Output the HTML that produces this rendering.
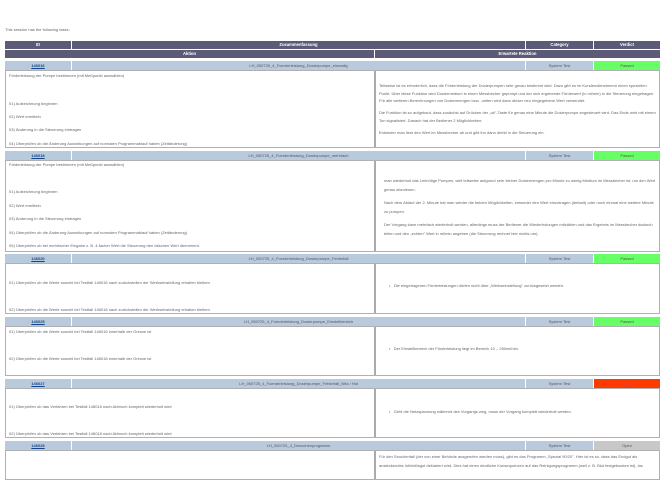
<!DOCTYPE html>
<html><head><meta charset="utf-8">
<style>
*{margin:0;padding:0;box-sizing:border-box}
body{width:668px;height:468px;background:#fff;position:relative;overflow:hidden;font-family:"Liberation Sans",sans-serif;font-size:4px;color:#666}
.a{position:absolute;white-space:nowrap}
.d{position:absolute;background:#5b5b78;color:#fff;font-weight:bold;text-align:center;line-height:8px;font-size:4.2px}
.h{position:absolute;background:#b8cadb;color:#556;text-align:center;line-height:9px;font-size:4px}
.c{position:absolute;border:1px solid #b0b0b0;background:#fff}
.v{position:absolute;line-height:9px;text-align:center;font-size:4px;color:#555}
.id{color:#114488;text-decoration:underline;font-weight:bold}
</style></head><body>
<div class="a" style="left:5px;top:27px;color:#666">This session has the following tasks:</div>

<div class="d" style="left:5px;top:41px;width:66px;height:8px">ID</div>
<div class="d" style="left:72px;top:41px;width:453px;height:8px">Zusammenfassung</div>
<div class="d" style="left:526px;top:41px;width:67px;height:8px">Category</div>
<div class="d" style="left:594px;top:41px;width:66px;height:8px">Verdict</div>
<div class="d" style="left:5px;top:50px;width:369px;height:8px">Aktion</div>
<div class="d" style="left:375px;top:50px;width:285px;height:8px">Erwartete Reaktion</div>

<div class="h" style="left:5px;top:61px;width:66px;height:9px"><span class="id">146016</span></div>
<div class="h" style="left:72px;top:61px;width:453px;height:9px">LH_050725_4_Foerderleistung_Dosierpumpe_einmalig</div>
<div class="h" style="left:526px;top:61px;width:67px;height:9px">System Test</div>
<div class="v" style="left:594px;top:61px;width:66px;height:9px;background:#66ff66">Passed</div>
<div class="c" style="left:5px;top:70px;width:655px;height:78px"></div>
<div style="position:absolute;left:374px;top:71px;width:2px;height:76px;background:#aaa"></div>
<div class="a" style="left:9px;top:73px">Förderleistung der Pumpe bestimmen (mit Meßpunkt auswählen)</div>
<div class="a" style="left:9px;top:101px">01) Aufzeichnung beginnen</div>
<div class="a" style="left:9px;top:114px">02) Wert ermitteln</div>
<div class="a" style="left:9px;top:127px">03) Änderung in die Steuerung eintragen</div>
<div class="a" style="left:9px;top:141px">04) Überprüfen ob die Änderung Auswirkungen auf normalen Programmablauf haben (Zeitänderung)</div>
<div class="a" style="left:379px;top:83px">Teilweise ist es erforderlich, dass die Förderleistung der Dosierpumpen sehr genau bestimmt wird. Dazu gibt es im Kundendienstmenü einen speziellen</div>
<div class="a" style="left:379px;top:91px">Punkt. Über diese Funktion wird Dosiermedium in einen Messbecher gepumpt und der sich ergebende Förderwert (in ml/min) in die Steuerung eingetragen.</div>
<div class="a" style="left:379px;top:98px">Für alle weiteren Berechnungen von Dosiermengen bzw. -zeiten wird dann dieser neu eingegebene Wert verwendet.</div>
<div class="a" style="left:379px;top:110px">Die Funktion ist so aufgebaut, dass zunächst auf Drücken der „ok"-Taste für genau eine Minute die Dosierpumpe angesteuert wird. Das Ende wird mit einem</div>
<div class="a" style="left:379px;top:118px">Ton signalisiert. Danach hat der Bediener 2 Möglichkeiten:</div>
<div class="a" style="left:379px;top:130px">Entweder man liest den Wert im Messbecher ab und gibt ihn dann direkt in die Steuerung ein.</div>

<div class="h" style="left:5px;top:151px;width:66px;height:9px"><span class="id">146018</span></div>
<div class="h" style="left:72px;top:151px;width:453px;height:9px">LH_050725_4_Foerderleistung_Dosierpumpe_mehrfach</div>
<div class="h" style="left:526px;top:151px;width:67px;height:9px">System Test</div>
<div class="v" style="left:594px;top:151px;width:66px;height:9px;background:#66ff66">Passed</div>
<div class="c" style="left:5px;top:160px;width:655px;height:92px"></div>
<div style="position:absolute;left:374px;top:161px;width:2px;height:90px;background:#aaa"></div>
<div class="a" style="left:9px;top:162px">Förderleistung der Pumpe bestimmen (mit Meßpunkt auswählen)</div>
<div class="a" style="left:9px;top:189px">01) Aufzeichnung beginnen</div>
<div class="a" style="left:9px;top:203px">02) Wert ermitteln</div>
<div class="a" style="left:9px;top:216px">03) Änderung in die Steuerung eintragen</div>
<div class="a" style="left:9px;top:230px">04) Überprüfen ob die Änderung Auswirkungen auf normalen Programmablauf haben (Zeitänderung)</div>
<div class="a" style="left:9px;top:243px">05) Überprüfen ob bei mehrfacher Eingabe z. B. 4-facher Wert die Steuerung den falschen Wert übernimmt.</div>
<div class="a" style="left:384px;top:178px">man wiederholt das 1minütige Pumpen, weil teilweise aufgrund sehr kleiner Dosiermengen pro Minute zu wenig Medium im Messbecher ist, um den Wert</div>
<div class="a" style="left:384px;top:187px">genau abzulesen.</div>
<div class="a" style="left:384px;top:200px">Nach dem Ablauf der 2. Minute hat man wieder die beiden Möglichkeiten, entweder den Wert einzutragen (default) oder noch einmal eine weitere Minute</div>
<div class="a" style="left:384px;top:209px">zu pumpen.</div>
<div class="a" style="left:384px;top:222px">Der Vorgang kann mehrfach wiederholt werden, allerdings muss der Bediener die Wiederholungen mitzählen und das Ergebnis im Messbecher dadurch</div>
<div class="a" style="left:384px;top:231px">teilen und den „echten" Wert in ml/min angeben (die Steuerung rechnet hier nichts um).</div>

<div class="h" style="left:5px;top:254px;width:66px;height:9px"><span class="id">146020</span></div>
<div class="h" style="left:72px;top:254px;width:453px;height:9px">LH_050725_4_Foerderleistung_Dosierpumpe_Fehlerfall</div>
<div class="h" style="left:526px;top:254px;width:67px;height:9px">System Test</div>
<div class="v" style="left:594px;top:254px;width:66px;height:9px;background:#66ff66">Passed</div>
<div class="c" style="left:5px;top:263px;width:655px;height:51px"></div>
<div style="position:absolute;left:374px;top:264px;width:2px;height:49px;background:#aaa"></div>
<div class="a" style="left:9px;top:280px">01) Überprüfen ob die Werte sowohl bei Testfall 146016 nach zurückstellen der Werkseinstellung erhalten bleiben</div>
<div class="a" style="left:9px;top:307px">02) Überprüfen ob die Werte sowohl bei Testfall 146018 nach zurückstellen der Werkseinstellung erhalten bleiben</div>
<div class="a" style="left:389px;top:283px">•&nbsp;&nbsp; Die eingetragenen Förderleistungen dürfen nicht über „Werkseinstellung" zurückgesetzt werden.</div>

<div class="h" style="left:5px;top:317px;width:66px;height:9px"><span class="id">146025</span></div>
<div class="h" style="left:72px;top:317px;width:453px;height:9px">LH_050725_4_Foerderleistung_Dosierpumpe_Einstellbereich</div>
<div class="h" style="left:526px;top:317px;width:67px;height:9px">System Test</div>
<div class="v" style="left:594px;top:317px;width:66px;height:9px;background:#66ff66">Passed</div>
<div class="c" style="left:5px;top:326px;width:655px;height:50px"></div>
<div style="position:absolute;left:374px;top:327px;width:2px;height:48px;background:#aaa"></div>
<div class="a" style="left:9px;top:329px">01) Überprüfen ob die Werte sowohl bei Testfall 146016 innerhalb der Grenze ist</div>
<div class="a" style="left:9px;top:356px">02) Überprüfen ob die Werte sowohl bei Testfall 146018 innerhalb der Grenze ist</div>
<div class="a" style="left:389px;top:346px">•&nbsp;&nbsp; Der Einstellbereich der Förderleistung liegt im Bereich 10 – 250ml/min.</div>

<div class="h" style="left:5px;top:379px;width:66px;height:9px"><span class="id">146027</span></div>
<div class="h" style="left:72px;top:379px;width:453px;height:9px">LH_050725_4_Foerderleistung_Dosierpumpe_Fehlerfall_Nfia / Hal</div>
<div class="h" style="left:526px;top:379px;width:67px;height:9px">System Test</div>
<div class="v" style="left:594px;top:379px;width:66px;height:9px;background:#ff3a00;color:#d44">Failed</div>
<div class="c" style="left:5px;top:388px;width:655px;height:50px"></div>
<div style="position:absolute;left:374px;top:389px;width:2px;height:48px;background:#aaa"></div>
<div class="a" style="left:9px;top:404px">01) Überprüfen ob das Verfahren bei Testfall 146016 nach Abbruch komplett wiederholt wird</div>
<div class="a" style="left:9px;top:431px">02) Überprüfen ob das Verfahren bei Testfall 146018 nach Abbruch komplett wiederholt wird</div>
<div class="a" style="left:389px;top:409px">•&nbsp;&nbsp; Geht die Netzspannung während des Vorgangs weg, muss der Vorgang komplett wiederholt werden.</div>

<div class="h" style="left:5px;top:441px;width:66px;height:9px"><span class="id">146029</span></div>
<div class="h" style="left:72px;top:441px;width:453px;height:9px">LH_050725_4_Desuchenprogramm</div>
<div class="h" style="left:526px;top:441px;width:67px;height:9px">System Test</div>
<div class="v" style="left:594px;top:441px;width:66px;height:9px;background:#c8c8c8">Open</div>
<div class="c" style="left:5px;top:450px;width:655px;height:30px"></div>
<div style="position:absolute;left:374px;top:451px;width:2px;height:28px;background:#aaa"></div>
<div class="a" style="left:379px;top:454px">Für den Seuchenfall (der von einer Behörde ausgerufen werden muss), gibt es das Programm „Spezial 90/20". Hier ist es so, dass das Endgut als</div>
<div class="a" style="left:379px;top:463px">ansteckendes Infektiösgut deklariert wird. Dies hat einen deutliche Konsequenzen auf das Reinigungsprogramm (weil z. B. Blut festgebacken ist), las</div>
</body></html>
